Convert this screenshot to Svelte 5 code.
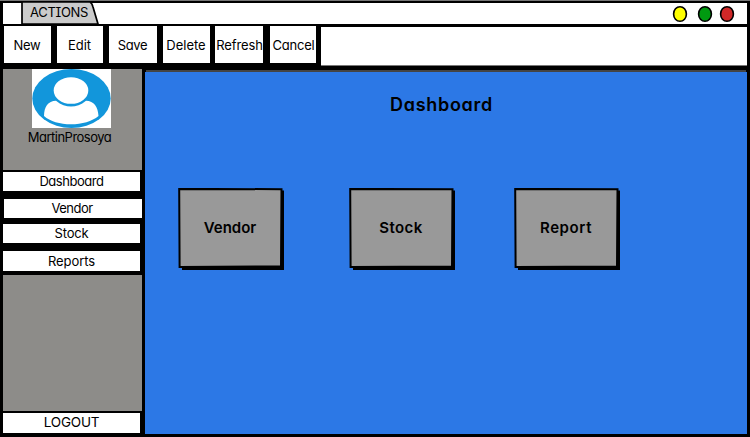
<script>
  const tools = [
    { label: 'New', width: 47, gap: 6, spacing: -0.3 },
    { label: 'Edit', width: 46, gap: 6, spacing: 0 },
    { label: 'Save', width: 48, gap: 6, spacing: -0.3 },
    { label: 'Delete', width: 47, gap: 5, spacing: 0 },
    { label: 'Refresh', width: 48, gap: 7, spacing: -0.1 },
    { label: 'Cancel', width: 46, gap: 0, spacing: -0.2 }
  ];
  const menu = ['Dashboard', 'Vendor', 'Stock', 'Reports'];
  const cards = ['Vendor', 'Stock', 'Report'];
  const lights = ['#ffff00', '#009a10', '#d02828'];
</script>

<div class="window">
  <header class="titlebar">
    <div class="tab">
      <svg width="79" height="23" viewBox="0 0 79 23">
        <path d="M1 0H69Q71 1 72 5L77 22H1Z" fill="#cbcbcb" stroke="#000" stroke-width="1.7" />
      </svg>
      <span>ACTIONS</span>
    </div>
    <div class="lights">
      {#each lights as color}
        <svg width="16" height="18" viewBox="0 0 16 18">
          <ellipse cx="8" cy="9" rx="6.4" ry="7.3" fill={color} stroke="#000" stroke-width="1.6" />
        </svg>
      {/each}
    </div>
  </header>

  <nav class="toolbar">
    <div class="tools">
      {#each tools as tool}
        <button class="tool" style="width:{tool.width}px;margin-right:{tool.gap}px;letter-spacing:{tool.spacing}px">
          <span>{tool.label}</span>
        </button>
      {/each}
    </div>
    <div class="blank"></div>
  </nav>

  <div class="body">
    <aside>
      <svg class="avatar" width="79" height="59" viewBox="0 0 79 59">
        <rect width="79" height="59" fill="#fff" />
        <ellipse cx="39.5" cy="29.5" rx="39.2" ry="29.5" fill="#1296db" />
        <path d="M12 47C12 38 16 32 24 31.8C29 36 34 37.5 39 37.5S49 36 54 31.8C62 32 66 38 66.5 47C60 52.5 50 55.3 39 55.3S18 52.5 12 47Z" fill="#fff" />
        <ellipse cx="39" cy="21.5" rx="17.3" ry="13.3" fill="#fff" />
      </svg>
      <div class="user">MartinProsoya</div>
      <nav class="menu">
        {#each menu as item, i}
          <button class="item item{i}">{item}</button>
        {/each}
      </nav>
      <button class="item logout">LOGOUT</button>
    </aside>
    <main>
      <h1>Dashboard</h1>
      <div class="cards">
        {#each cards as card}
          <button class="card">
            <svg width="107" height="82" viewBox="0 0 107 82">
              <path d="M4 78H102V2.5H106V82H4Z" fill="#000" />
              <path d="M1.2 .9L103.5 1.2L103 78.4L1.6 79Z" fill="#999" stroke="#000" stroke-width="2" />
            </svg>
            <span>{card}</span>
          </button>
        {/each}
      </div>
    </main>
  </div>
</div>

<style>
  .window {
    width: 750px;
    height: 437px;
    box-sizing: border-box;
    padding: 2px;
    background: #000;
    border-top: 1px solid #777;
    color: #000;
    font-family: Inter, "Liberation Sans", sans-serif;
    font-feature-settings: "cv11", "cv08";
    font-size: 13px;
    display: flex;
    flex-direction: column;
    overflow: hidden;
  }
  button {
    border: 0;
    padding: 0;
    margin: 0;
    background: #fff;
    color: inherit;
    font: inherit;
    font-feature-settings: inherit;
    white-space: nowrap;
  }
  .titlebar {
    height: 21px;
    flex: none;
    background: #fff;
    display: flex;
    justify-content: space-between;
    border-left: 1px solid #000;
    border-right: 1px solid #000;
  }
  .tab {
    position: relative;
    margin-left: 18px;
    width: 79px;
    height: 21px;
  }
  .tab svg {
    position: absolute;
    top: -1px;
    left: 0;
  }
  .tab span {
    position: relative;
    display: block;
    padding-left: 9px;
    line-height: 19px;
    letter-spacing: -0.3px;
  }
  .lights {
    display: flex;
    align-items: center;
    padding-top: 1px;
    padding-right: 12px;
  }
  .lights svg:nth-child(2) { margin: 0 6px 0 9px; }
  .toolbar {
    height: 45px;
    flex: none;
    display: flex;
  }
  .tools {
    display: flex;
    width: 319px;
    padding: 2px 0 0 2px;
    box-sizing: border-box;
    flex: none;
  }
  .tool {
    height: 37px;
    flex: none;
    display: flex;
    justify-content: center;
    align-items: center;
  }
  .tool span { padding-right: 1px; }
  .tool:nth-child(n + 5) span { padding: 0 0 0 1px; }
  .blank {
    flex: 1;
    margin: 2px 1px 3px 0;
    background: #fff;
    border-bottom: 1px solid #777;
    border-top: 1px solid #000;
    box-sizing: border-box;
  }
  .body {
    flex: 1;
    display: flex;
  }
  aside {
    width: 139px;
    margin-left: 1px;
    background: #8d8c89;
    display: flex;
    flex-direction: column;
  }
  .avatar {
    display: block;
    margin-left: 29px;
    flex: none;
  }
  .user {
    height: 20px;
    line-height: 19px;
    text-align: center;
    padding-right: 6px;
    letter-spacing: -0.5px;
  }
  .menu {
    margin-top: 22px;
    height: 105px;
    box-sizing: border-box;
    background: #000;
    padding-top: 2px;
  }
  .item {
    display: block;
    width: 137px;
    height: 19px;
    line-height: 19px;
    text-align: center;
  }
  .item0 { letter-spacing: -0.45px; }
  .item1 {
    width: 138px;
    margin: 8px 0 6px 1px;
    padding-right: 2px;
    box-sizing: border-box;
    letter-spacing: -0.5px;
  }
  .item2 { margin-bottom: 8px; letter-spacing: -0.2px; }
  .item3 { height: 20px; letter-spacing: -0.1px; }
  .logout {
    width: 139px;
    height: 24px;
    line-height: 18px;
    box-sizing: border-box;
    margin-top: auto;
    border-top: 2px solid #000;
    border-right: 2px solid #000;
    border-bottom: 2px solid #000;
    padding-bottom: 2px;
    font-size: 13.5px;
    letter-spacing: -0.2px;
  }
  main {
    flex: none;
    width: 602px;
    height: 362px;
    margin: 3px 0 0 3px;
    background: #2c78e6;
    box-shadow: 0 -3px 0 -1px #444;
  }
  h1 {
    margin: 0;
    padding: 21px 9px 0 0;
    font-size: 18px;
    line-height: 24px;
    font-weight: 600;
    text-align: center;
    letter-spacing: 0.7px;
  }
  .cards {
    display: flex;
    padding: 71px 0 0 33px;
  }
  .card {
    position: relative;
    width: 107px;
    height: 82px;
    background: none;
    font-size: 15px;
    font-weight: 600;
    letter-spacing: 0;
  }
  .card:nth-child(2) { margin: 0 58px 0 64px; letter-spacing: 0.4px; }
  .card:nth-child(3) { letter-spacing: 0.6px; }
  .card svg {
    position: absolute;
    left: 0;
    top: 0;
  }
  .card span {
    position: relative;
    display: block;
    padding-right: 3px;
    padding-bottom: 3px;
  }
</style>
